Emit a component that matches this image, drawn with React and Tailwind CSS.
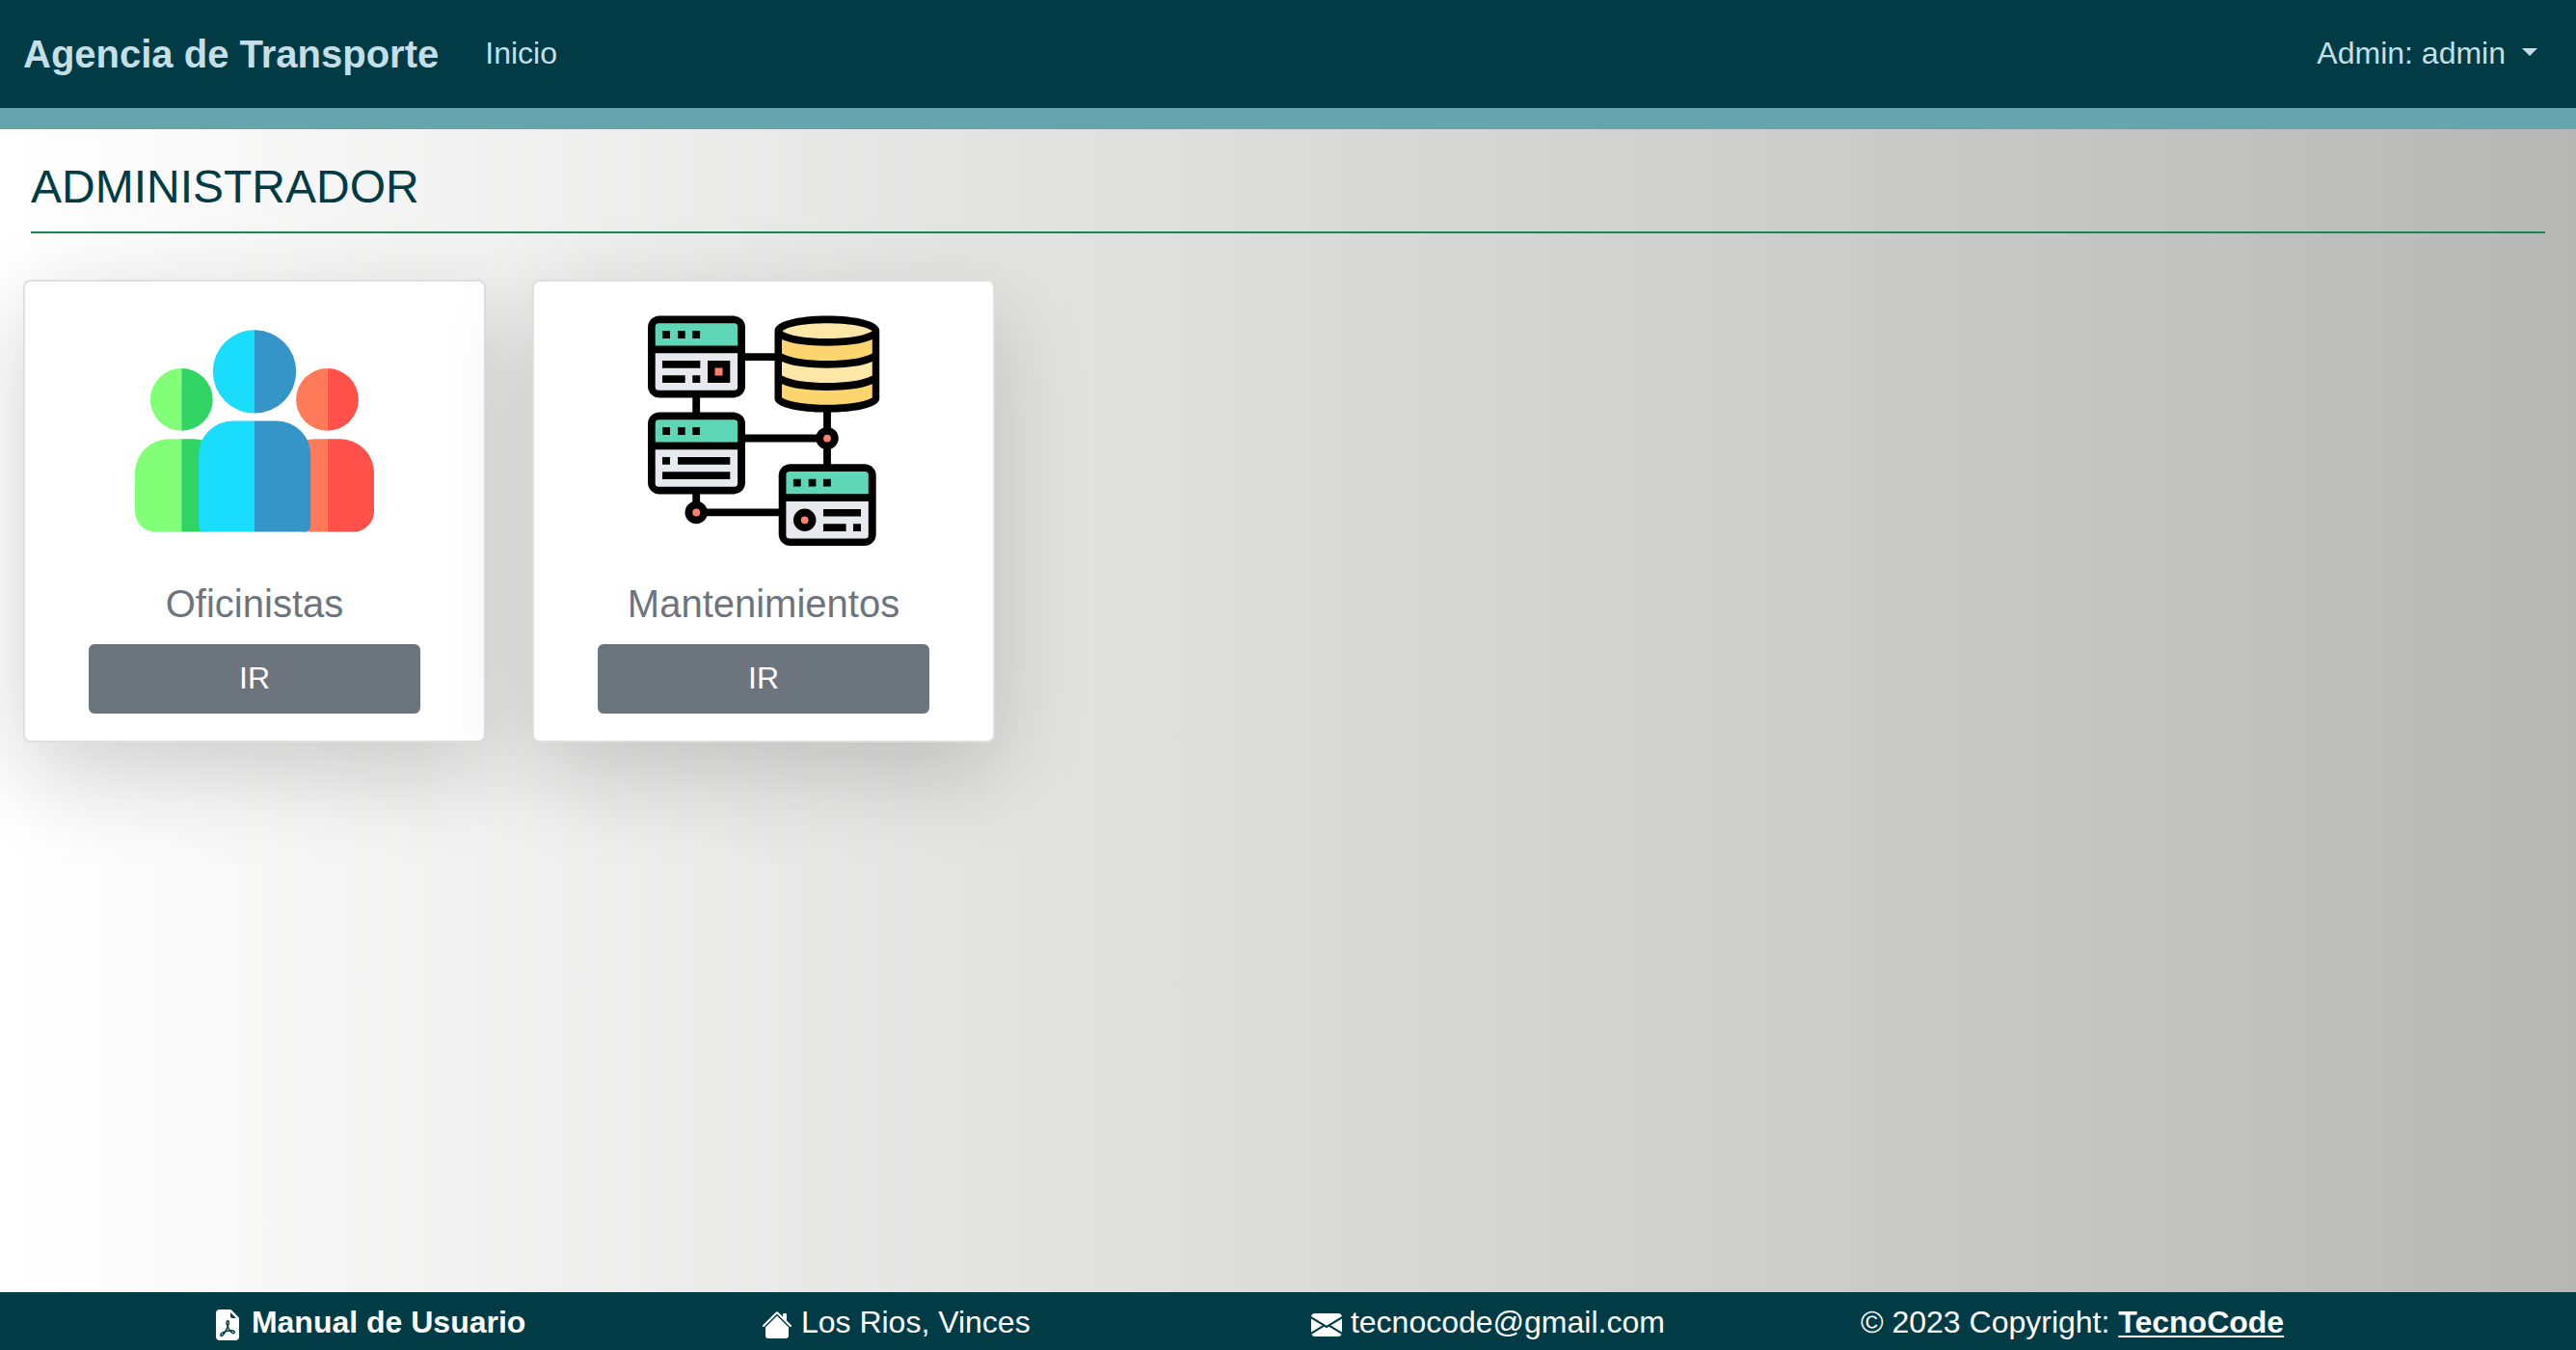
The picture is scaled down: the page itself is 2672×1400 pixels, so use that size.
import React from "react";
import { BsFileEarmarkPdfFill } from "react-icons/bs";

function HouseIcon() {
  return (
    <svg viewBox="0 0 16 16" fill="currentColor" className="inline-block h-8 w-8 align-[-8px]">
      <path fillRule="evenodd" d="m8 3.293 6 6V13.5a1.5 1.5 0 0 1-1.5 1.5h-9A1.5 1.5 0 0 1 2 13.500V9.293l6-6zm5-.793V6l-2-2V2.500a.5.5 0 0 1 .5-.5h1a.5.5 0 0 1 .5.5z" />
      <path fillRule="evenodd" d="M7.293 1.500a1 1 0 0 1 1.414 0l6.647 6.646a.5.5 0 0 1-.708.708L8 2.207 1.354 8.854a.5.5 0 1 1-.708-.708L7.293 1.500z" />
    </svg>
  );
}

function EnvelopeIcon() {
  return (
    <svg viewBox="0 0 16 16" fill="currentColor" className="inline-block h-8 w-8 align-[-8px]">
      <path d="M.05 3.555A2 2 0 0 1 2 2h12a2 2 0 0 1 1.950 1.555L8 8.414.05 3.555ZM0 4.697v7.104l5.803-3.558L0 4.697ZM6.761 8.830l-6.570 4.027A2 2 0 0 0 2 14h12a2 2 0 0 0 1.808-1.144l-6.570-4.027L8 9.586l-1.239-.757Zm3.436-.586L16 11.801V4.697l-5.803 3.546Z" />
    </svg>
  );
}

function PeopleArt() {
  return (
    <svg viewBox="0 0 250 250" className="h-[250px] w-[250px]">
      <path d="M49.300 60a32.400 32.400 0 0 0 0 64.800z" fill="#80ff77" />
      <path d="M49.300 60a32.400 32.400 0 0 1 0 64.800z" fill="#2fd463" />
      <path d="M49.300 133.300H36a35 35 0 0 0-35 35v40a21.300 21.300 0 0 0 21.300 21.300h27z" fill="#80ff77" />
      <path d="M49.300 133.300H62a34 34 0 0 1 14 3v93.300H49.300z" fill="#2fd463" />
      <path d="M200.500 60a32.400 32.400 0 0 0 0 64.800z" fill="#ff7a59" />
      <path d="M200.500 60a32.400 32.400 0 0 1 0 64.800z" fill="#ff5149" />
      <path d="M200.500 133.300H187a34 34 0 0 0-13 3v93.300h26.500z" fill="#ff7a59" />
      <path d="M200.500 133.300H214a35 35 0 0 1 35 35v40a21.300 21.300 0 0 1-21.300 21.300h-27.200z" fill="#ff5149" />
      <path d="M125 20.200a43.200 43.200 0 0 0 0 86.400z" fill="#18ddfd" />
      <path d="M125 20.200a43.200 43.200 0 0 1 0 86.400z" fill="#3594c8" />
      <path d="M125 114.500h-22.800a35 35 0 0 0-35 35v74a6 6 0 0 0 6 6H125z" fill="#18ddfd" />
      <path d="M125 114.500h23.200a35 35 0 0 1 35 35v74a6 6 0 0 1-6 6H125z" fill="#3594c8" />
    </svg>
  );
}

function WindowArt({ x, y }) {
  return (
    <g transform={`translate(${x} ${y})`}>
      <rect width="101" height="84.800" rx="12" fill="#000" />
      <path d="M7.700 31V11.200a3.500 3.500 0 0 1 3.500-3.500h78.400a3.500 3.500 0 0 1 3.500 3.500V31z" fill="#5dd7b5" />
      <path d="M7.700 38.600h85.400v35a3.500 3.500 0 0 1-3.500 3.500H11.200a3.500 3.500 0 0 1-3.500-3.500z" fill="#e6e9ee" />
      <path d="M15.200 15.400H23v7.900h-7.800zM31 15.400h7.700v7.900H31zM46.300 15.400h7.800v7.900h-7.800z" fill="#000" />
    </g>
  );
}

function ServersArt() {
  return (
    <svg viewBox="0 7 250 250" className="h-[250px] w-[250px]">
      <path
        d="M105 55.200h45M55.200 96v22M105 139.500h86M191 110v60M55.200 195v20M62 216.400h85"
        fill="none"
        stroke="#000"
        strokeWidth="7.800"
      />
      <WindowArt x={5} y={12.6} />
      <path d="M20 59h39.300v7.700H20zM20 74.200h23.700V82H20zM51.300 74.200h8V82h-8zM67 59h23.300v23H67z" fill="#000" />
      <path d="M74.500 66.500h8v8h-8z" fill="#ff806c" />
      <WindowArt x={5} y={112.6} />
      <path d="M20 159h8v7.700h-8zM36 159h54.300v7.700H36zM20 174.300h70.300v7.700H20z" fill="#000" />
      <WindowArt x={140.7} y={166.3} />
      <path d="M187 213h39v7.600h-39zM187 228.200h23.600v7.700H187zM218 228.200h8v7.700h-8z" fill="#000" />
      <circle cx="167.700" cy="224.300" r="11.700" fill="#000" />
      <circle cx="167.700" cy="224.300" r="3.900" fill="#ff806c" />
      <circle cx="191" cy="139.600" r="11.700" fill="#000" />
      <circle cx="191" cy="139.600" r="3.900" fill="#ff806c" />
      <circle cx="55.200" cy="216.500" r="11.700" fill="#000" />
      <circle cx="55.200" cy="216.500" r="3.900" fill="#ff806c" />
      <path d="M136.500 28c0-9.500 24-15.400 54.400-15.400S245.200 18.500 245.200 28v70.300c0 9-24 14.400-54.300 14.400s-54.400-5.400-54.400-14.400z" fill="#000" />
      <path d="M144.500 28.300C151 23.100 170 20.300 190.900 20.300s40 2.800 46.800 8c-6.800 5-26 7.800-46.800 7.800s-39.900-2.800-46.400-7.800z" fill="#ffe8a7" />
      <path d="M144 37c10 4.600 28 6.700 46.900 6.700s37-2.100 46.900-6.700v14.500c-9 5.200-28 7.500-46.900 7.500s-37.900-2.300-46.900-7.500z" fill="#fdd56e" />
      <path d="M144 60c10 4.600 28 6.700 46.900 6.700s37-2.100 46.900-6.700v14.500c-9 5.200-28 7.500-46.900 7.500s-37.900-2.300-46.900-7.500z" fill="#ffe8a7" />
      <path d="M144 83.200c10 4.600 28 6.700 46.900 6.700s37-2.100 46.900-6.700v14.300c-9 5-28 7.300-46.900 7.300s-37.900-2.300-46.900-7.300z" fill="#fdd56e" />
    </svg>
  );
}

function Card({ title, children }) {
  return (
    <div className="flex h-[480px] w-[480px] flex-col items-center rounded-lg border-2 border-black/[0.125] bg-white bg-clip-border pt-[30px] shadow-[0_32px_96px_rgba(0,0,0,0.175)]">
      {children}
      <h5 className="mt-[30px] text-[40px] leading-[48px] text-[#6c757d]">{title}</h5>
      <button className="mt-[18px] h-[72px] w-[344px] rounded-md bg-[#6c757d] pb-0.5 text-[32px] leading-[48px] text-white">IR</button>
    </div>
  );
}

export default function App() {
  return (
    <div className="flex h-[1400px] w-[2672px] flex-col overflow-hidden bg-[linear-gradient(90deg,#ffffff_0%,#b7b7b5_100%)] font-['Liberation_Sans',Arial,sans-serif] text-[32px] leading-[48px]">
      <nav className="flex h-28 shrink-0 items-center bg-[#003b46] px-6 text-[#c4dfe6]">
        <a className="text-[40px] leading-[60px] font-bold">Agencia de Transporte</a>
        <a className="ml-12 pb-0.5">Inicio</a>
        <a className="mr-4 ml-auto flex items-center pb-0.5">
          Admin: admin
          <svg viewBox="0 0 16 8" className="mb-0.5 ml-[17px] h-2 w-4" fill="currentColor">
            <path d="M0 0h16L8 8z" />
          </svg>
        </a>
      </nav>
      <div className="h-[22px] shrink-0 bg-[#66a5ad]" />
      <main className="flex flex-1 flex-col">
        <h1 className="mx-8 h-[108px] border-b-2 border-[#198754] pt-[31px] text-[48px] leading-[58px] text-[#003b46]">ADMINISTRADOR</h1>
        <div className="mt-12 ml-6 flex gap-12">
          <Card title="Oficinistas"><PeopleArt /></Card>
          <Card title="Mantenimientos"><ServersArt /></Card>
        </div>
      </main>
      <footer className="h-[60px] shrink-0 bg-[#003b46] text-white">
        <div className="mx-auto grid w-[2280px] grid-cols-4 pt-[7px] whitespace-nowrap">
          <div className="px-6 font-bold"><BsFileEarmarkPdfFill className="inline-block h-8 w-8 align-[-8px]" /> Manual de Usuario</div>
          <div className="px-6"><HouseIcon /> Los Rios, Vinces</div>
          <div className="px-6"><EnvelopeIcon /> tecnocode@gmail.com</div>
          <div className="px-6">© 2023 Copyright: <a className="font-bold underline decoration-2 underline-offset-[3px]">TecnoCode</a></div>
        </div>
      </footer>
    </div>
  );
}
